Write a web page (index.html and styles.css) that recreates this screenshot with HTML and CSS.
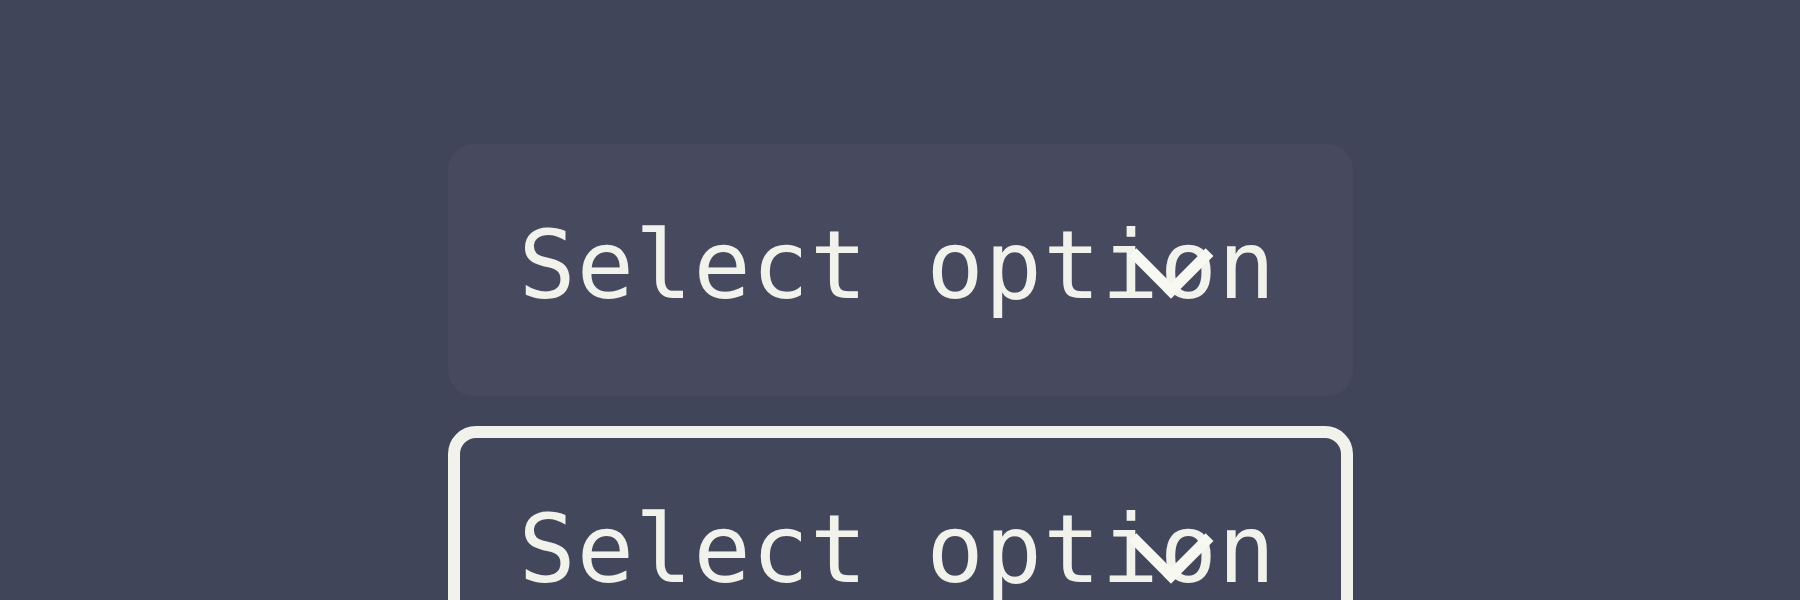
FILE: index.html
```html
<!DOCTYPE html>
<html>
<head>
<meta charset="utf-8">
<link rel="stylesheet" href="styles.css">
</head>
<body>
  <div class="list">
    <div class="option">
      <span class="label">Select option</span>
      <span class="check"></span>
    </div>
    <div class="option option--focused">
      <span class="label">Select option</span>
      <span class="check"></span>
    </div>
  </div>
</body>
</html>
```

FILE: styles.css
```css
html, body {
  margin: 0;
  padding: 0;
  background: #41455a;
}
body {
  width: 1800px;
  height: 600px;
  overflow: hidden;
  font-family: "DejaVu Sans Mono", "Liberation Mono", monospace;
  color: #f2f2ec;
}
.list {
  display: flex;
  flex-direction: column;
  align-items: center;
  gap: 30px;
  padding-top: 144px;
}
.option {
  position: relative;
  box-sizing: border-box;
  width: 905px;
  height: 252px;
  padding: 65px 71px 0;
  border-radius: 26px;
  background: #474a5e;
}
.option--focused {
  background: #43475b;
  border: 12px solid #f2f2ec;
  padding: 55px 59px 0;
  border-radius: 28px;
}
.label {
  display: block;
  font-size: 95px;
  letter-spacing: 1.1px;
  line-height: 112px;
  white-space: pre;
}
.check {
  position: absolute;
  left: 693px;
  top: 82px;
  width: 60px;
  height: 60px;
  box-sizing: border-box;
  border-right: 11px solid #f8f8f3;
  border-bottom: 11px solid #f8f8f3;
  transform: rotate(45deg);
}
.option--focused .check {
  left: 681px;
  top: 73px;
}
```
